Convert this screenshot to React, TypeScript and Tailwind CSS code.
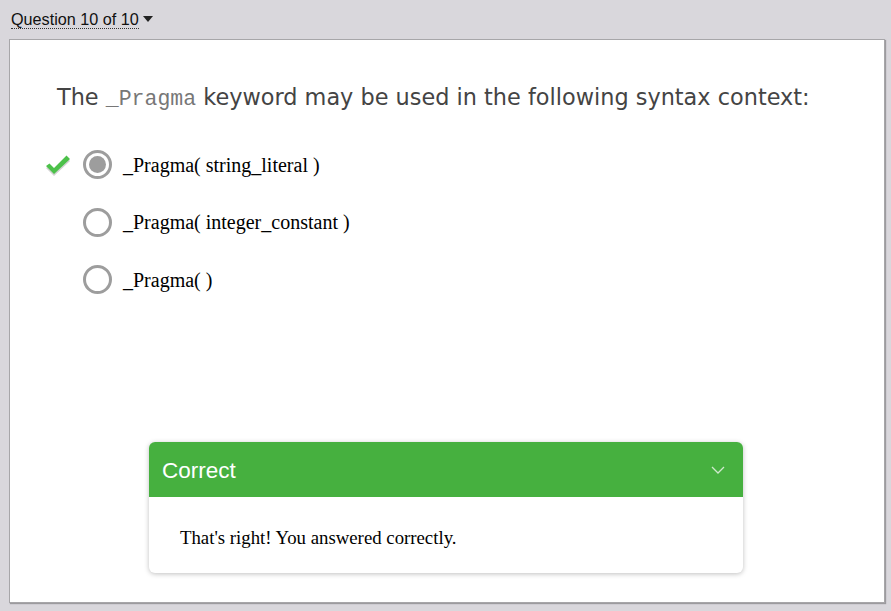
export default function App() {
  const options = ['_Pragma( string_literal )', '_Pragma( integer_constant )', '_Pragma( )'];
  return (
    <div className="w-[891px] h-[611px] bg-[#d9d7dc] flex flex-col overflow-hidden">
      <div className="h-[39px] px-[11px] flex items-center font-['Liberation_Sans',Arial,sans-serif] text-[16.2px] text-[#111]">
        <span className="border-b border-dotted border-[#333] leading-[18px]">Question 10 of 10</span>
        <svg width="10" height="6" viewBox="0 0 10 6" className="ml-[4px] mb-[2px]">
          <path d="M0 0 L10 0 L5 6 Z" fill="#222" />
        </svg>
      </div>
      <div className="mx-[9px] mr-[6px] h-[564px] bg-white border border-[#a7a6a9] shadow-[1px_1px_1px_#9c9b9e] flex flex-col">
        <h1 className="mt-[42px] ml-[47px] font-['DejaVu_Sans',Verdana,sans-serif] text-[22.4px] text-[#444] leading-[30px]">
          The{' '}
          <code className="font-['Liberation_Mono','Courier_New',monospace] text-[#777] text-[21.5px]">_Pragma</code>{' '}
          keyword may be used in the following syntax context:
        </h1>
        <div className="mt-[36px] flex flex-col gap-[28.5px] ml-[35px]">
          {options.map((o, i) => (
            <div key={i} className="flex items-center h-[29px]">
              <div className="w-[38px] flex items-center">
                {i === 0 && (
                  <svg width="26" height="22" viewBox="0 0 26 22">
                    <path d="M1 12 L9 20 L25 5 L21.5 1.5 L9 14 L4.5 9.5 Z" fill="#d2d2d2" transform="translate(0,2)" />
                    <path d="M1 12 L9 20 L25 5 L21.5 1.5 L9 14 L4.5 9.5 Z" fill="#4cc14a" />
                  </svg>
                )}
              </div>
              <div className="w-[29px] h-[29px] rounded-full border-[3px] border-[#9d9d9d] flex items-center justify-center">
                {i === 0 && <div className="w-[17px] h-[17px] rounded-full bg-[#9d9d9d]" />}
              </div>
              <span className="ml-[11px] font-['Liberation_Serif','Times_New_Roman',serif] text-[20px] text-black">{o}</span>
            </div>
          ))}
        </div>
        <div className="mt-auto mb-[29px] ml-[139px] w-[594px] rounded-[6px] bg-white shadow-[0_1px_5px_rgba(0,0,0,0.25)] overflow-hidden">
          <div className="h-[55px] bg-[#46b03f] flex items-center justify-between px-[13px] pr-[18px] pt-[3px]">
            <span className="font-['Liberation_Sans',Arial,sans-serif] text-[22.5px] text-white">Correct</span>
            <svg width="14" height="8" viewBox="0 0 14 8" className="mb-[3px]">
              <path d="M1 1 L7 7 L13 1" stroke="#cfe9cd" strokeWidth="1.3" fill="none" />
            </svg>
          </div>
          <div className="h-[76px] flex items-center pl-[31px] pt-[6px] font-['Liberation_Serif','Times_New_Roman',serif] text-[18.8px] text-black">
            That's right! You answered correctly.
          </div>
        </div>
      </div>
    </div>
  );
}
